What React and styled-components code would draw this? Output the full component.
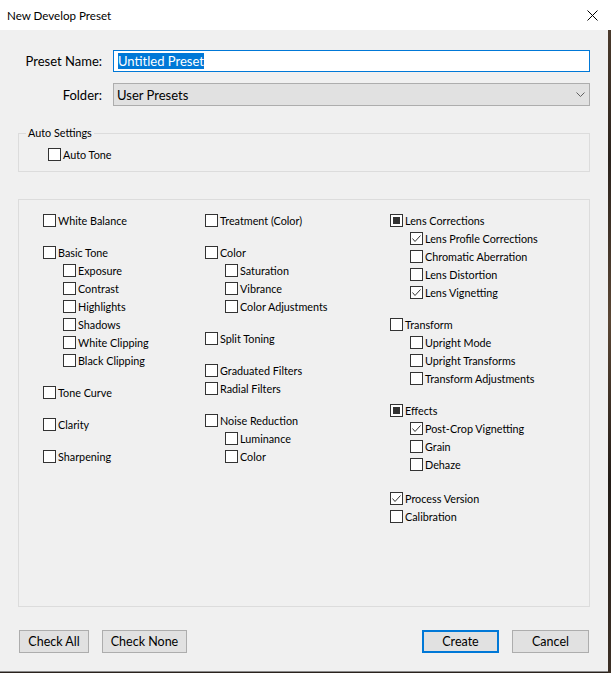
import React from 'react';
import styled, { createGlobalStyle } from "styled-components";

const GlobalStyle = createGlobalStyle`
html, body {
  margin: 0;
  padding: 0;
  background: #ffffff;
}
body {
  font-family: "Lato", "Liberation Sans", sans-serif;
  font-size: 10.8px;
  color: #000;
}
`;

const Window = styled.div`
display: flex;
flex-direction: column;
width: 611px;
height: 673px;
background-color: #2a221c;
`;

const TitleBar = styled.div`
display: flex;
justify-content: space-between;
align-items: center;
height: 30px;
flex: none;
padding: 0 13px 0 7px;
background-color: #ffffff;
font-size: 11.6px;
`;

const Content = styled.div`
display: flex;
flex: 1;
min-height: 0;
`;

const Body = styled.div`
display: flex;
flex-direction: column;
width: 608px;
box-sizing: border-box;
padding: 20px 18px 18px 18px;
margin-bottom: 1px;
background-color: #f0f0f0;
border-bottom: 1px solid #8a8a8a;
`;

const Backdrop = styled.div`
flex: 1;
background: linear-gradient(180deg, #4a3a2c 0%, #2b231d 20%, #5a4634 45%, #231c17 70%, #3c3026 100%);
`;

const FormGrid = styled.div`
display: grid;
grid-template-columns: 84px 1fr;
grid-auto-rows: min-content;
column-gap: 11px;
row-gap: 11px;
align-items: center;
font-size: 13px;
line-height: 16px;
`;

const Label = styled.div`
text-align: right;
`;

const TextField = styled.div`
display: flex;
align-items: center;
height: 22px;
box-sizing: border-box;
padding: 0 4px;
border: 1px solid #0078d7;
background-color: #ffffff;
`;

const Selected = styled.span`
background-color: #0078d7;
color: #ffffff;
line-height: 16px;
`;

const Select = styled.div`
display: flex;
justify-content: space-between;
align-items: center;
height: 23px;
box-sizing: border-box;
padding: 0 4px 0 3px;
border: 1px solid #adadad;
background-color: #e1e1e1;
`;

const GroupBox = styled.fieldset`
margin: 19px 0 0 0;
padding: 4px 0 8px 29px;
border: 1px solid #dcdcdc;
min-inline-size: 0;
`;

const Legend = styled.legend`
margin-left: -22px;
padding: 0 2px;
font-size: 10.8px;
line-height: 16px;
height: 16px;
`;

const OptionsBox = styled.div`
display: grid;
grid-template-columns: 162px 185px 1fr;
flex: 1;
margin-top: 27px;
padding: 11px 0 0 24px;
border: 1px solid #dcdcdc;
`;

const Column = styled.div`
display: flex;
flex-direction: column;
gap: 14px;
`;

const Group = styled.div`
display: flex;
flex-direction: column;
margin-top: ${p => p.$mt || 0}px;
`;

const Row = styled.div`
display: flex;
align-items: center;
gap: 2px;
height: ${p => p.$h || 18}px;
padding-left: ${p => (p.$sub ? 20 : 0)}px;
white-space: nowrap;
`;

const Box = styled.span`
display: inline-flex;
justify-content: center;
align-items: center;
flex: none;
width: 13px;
height: 13px;
box-sizing: border-box;
border: 1px solid #333333;
background-color: #ffffff;
`;

const Mixed = styled.span`
width: 7px;
height: 7px;
background-color: #333333;
`;

const Footer = styled.div`
display: flex;
justify-content: space-between;
margin-top: 23px;
padding: 0 1px;
`;

const ButtonGroup = styled.div`
display: flex;
gap: 13px;
`;

const Button = styled.button`
width: ${p => p.$w}px;
height: 23px;
box-sizing: border-box;
padding: 0;
border: ${p => (p.$default ? "2px solid #0078d7" : "1px solid #adadad")};
background-color: #e1e1e1;
font-family: inherit;
font-size: 12.5px;
color: #000;
`;

function CheckBox({ label, state, sub, h }) {
    return (
        <Row $sub={sub} $h={h}>
            <Box>
                {state === "checked" && (
                    <svg width="11" height="11" viewBox="0 0 11 11">
                        <polyline points="1.5,5.5 4,8.5 9.5,2.5" fill="none" stroke="#333" strokeWidth="1" />
                    </svg>
                )}
                {state === "mixed" && <Mixed />}
            </Box>
            <span>{label}</span>
        </Row>
    );
}

const columns = [
    [
        { label: "White Balance" },
        { label: "Basic Tone", items: ["Exposure", "Contrast", "Highlights", "Shadows", "White Clipping", "Black Clipping"] },
        { label: "Tone Curve" },
        { label: "Clarity" },
        { label: "Sharpening" },
    ],
    [
        { label: "Treatment (Color)" },
        { label: "Color", items: ["Saturation", "Vibrance", "Color Adjustments"] },
        { label: "Split Toning" },
        { label: "Graduated Filters", extra: ["Radial Filters"] },
        { label: "Noise Reduction", items: ["Luminance", "Color"] },
    ],
    [
        {
            label: "Lens Corrections", state: "mixed",
            items: [["Lens Profile Corrections", "checked"], "Chromatic Aberration", "Lens Distortion", ["Lens Vignetting", "checked"]],
        },
        { label: "Transform", items: ["Upright Mode", "Upright Transforms", "Transform Adjustments"] },
        { label: "Effects", state: "mixed", items: [["Post-Crop Vignetting", "checked"], "Grain", "Dehaze"] },
        { label: "Process Version", state: "checked", mt: 2, extra: [["Calibration", "", 19]] },
    ],
];

function norm(item) {
    return Array.isArray(item) ? item : [item, ""];
}

export default function App() {
    return (
        <>
            <GlobalStyle />
            <Window>
                <TitleBar>
                    <span>New Develop Preset</span>
                    <svg width="11" height="11" viewBox="0 0 11 11">
                        <path d="M0.5 0.5 L10.5 10.5 M10.5 0.5 L0.5 10.5" stroke="#000" strokeWidth="1" />
                    </svg>
                </TitleBar>
                <Content>
                    <Body>
                        <FormGrid>
                            <Label>Preset Name:</Label>
                            <TextField><Selected>Untitled Preset</Selected></TextField>
                            <Label>Folder:</Label>
                            <Select>
                                <span>User Presets</span>
                                <svg width="9" height="6" viewBox="0 0 9 6">
                                    <polyline points="0.5,0.5 4.5,4.5 8.5,0.5" fill="none" stroke="#606060" strokeWidth="1" />
                                </svg>
                            </Select>
                        </FormGrid>

                        <GroupBox>
                            <Legend>Auto Settings</Legend>
                            <CheckBox label="Auto Tone" />
                        </GroupBox>

                        <OptionsBox>
                            {columns.map((col, ci) => (
                                <Column key={ci}>
                                    {col.map(g => (
                                        <Group key={g.label} $mt={g.mt}>
                                            <CheckBox label={g.label} state={g.state} />
                                            {(g.extra || []).map(it => {
                                                const [l, s, h] = norm(it);
                                                return <CheckBox key={l} label={l} state={s} h={h} />;
                                            })}
                                            {(g.items || []).map(it => {
                                                const [l, s] = norm(it);
                                                return <CheckBox key={l} label={l} state={s} sub />;
                                            })}
                                        </Group>
                                    ))}
                                </Column>
                            ))}
                        </OptionsBox>

                        <Footer>
                            <ButtonGroup>
                                <Button $w={70}>Check All</Button>
                                <Button $w={85}>Check None</Button>
                            </ButtonGroup>
                            <ButtonGroup>
                                <Button $w={77} $default>Create</Button>
                                <Button $w={77}>Cancel</Button>
                            </ButtonGroup>
                        </Footer>
                    </Body>
                    <Backdrop />
                </Content>
            </Window>
        </>
    );
}
